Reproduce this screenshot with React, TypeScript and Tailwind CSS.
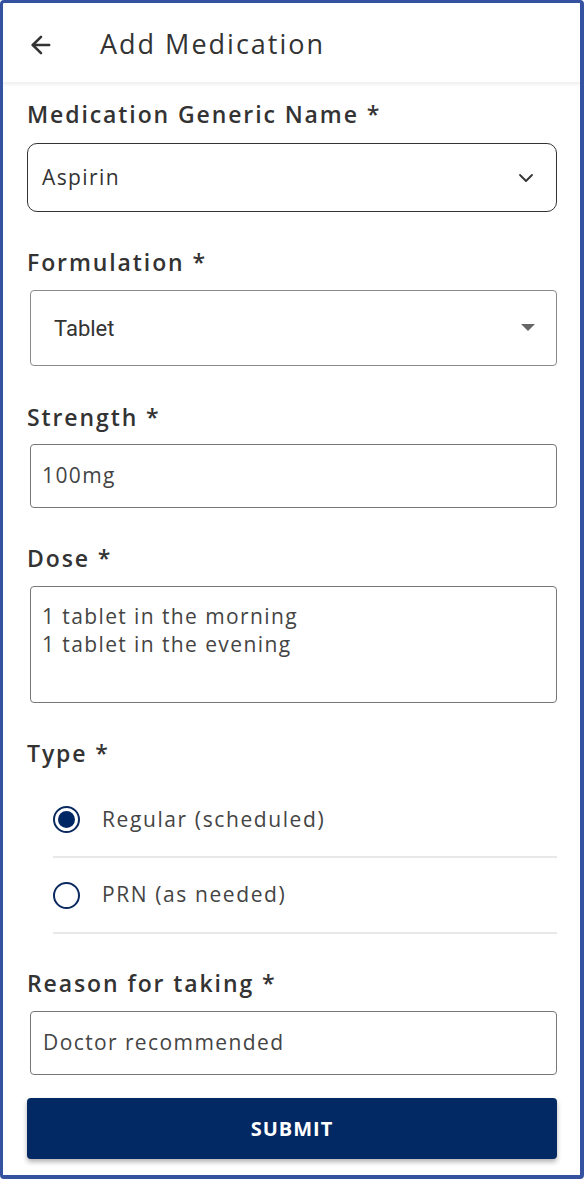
import { ArrowLeft, ChevronDown } from 'lucide-react'

const font = { fontFamily: '"Open Sans", "DejaVu Sans", sans-serif' }

const Label = ({ text, className = '' }: { text: string; className?: string }) => (
  <div className={`h-[28px] leading-[28px] text-[23px] font-semibold text-[#333] tracking-[1.9px] ${className}`}>{text}</div>
)

const Radio = ({ label, checked, h }: { label: string; checked?: boolean; h: string }) => (
  <div className={`flex items-center ${h} ml-[26px] border-b-2 border-[#e8e8e8]`}>
    <div className="w-[27px] h-[27px] rounded-full border-2 border-[#0b2a5f] flex items-center justify-center shrink-0">
      {checked && <div className="w-[17px] h-[17px] rounded-full bg-[#002663]"></div>}
    </div>
    <span className="ml-[22px] text-[21px] text-[#444] tracking-[1.6px]">{label}</span>
  </div>
)

export default function App() {
  return (
    <div style={font} className="w-[584px] h-[1179px] bg-white border-t-[3px] border-l-[3px] border-r-[4px] border-b-[4px] border-[#3452a0] rounded-[4px] flex flex-col overflow-hidden">
      <header className="h-[80px] flex items-center pl-[24px] pt-[4px] shadow-[0_2px_3px_rgba(0,0,0,0.06)] border-b border-[#f0f0f0]">
        <ArrowLeft size={28} strokeWidth={2.2} className="text-[#333]" />
        <h1 className="ml-[45px] text-[27px] font-medium text-[#333] tracking-[2px]">Add Medication</h1>
      </header>

      <div className="flex flex-col pl-[24px] pr-[23px]">
        <Label text="Medication Generic Name *" className="mt-[17px]" />
        <div className="mt-[15px] h-[69px] border-[1.5px] border-[#333] rounded-[10px] flex items-center justify-between pl-[14px] pr-[18px]">
          <span className="text-[21px] text-[#333] tracking-[1.4px]">Aspirin</span>
          <ChevronDown size={24} strokeWidth={1.8} className="text-[#333]" />
        </div>

        <Label text="Formulation *" className="mt-[36px]" />
        <div className="mt-[14px] ml-[3px] h-[76px] border border-[#8a8a8a] rounded-[4px] flex items-center justify-between pl-[23px] pr-[21px]">
          <span className="text-[22px] text-[#333]" style={{ fontFamily: 'Roboto, sans-serif' }}>Tablet</span>
          <svg width="14" height="8" viewBox="0 0 14 8"><path d="M0 0h14L7 7z" fill="#666" /></svg>
        </div>

        <Label text="Strength *" className="mt-[37px]" />
        <div className="mt-[13px] ml-[3px] h-[64px] border-[1.5px] border-[#777] rounded-[4px] flex items-center pl-[11px]">
          <span className="text-[21px] text-[#444] tracking-[1.4px]">100mg</span>
        </div>

        <Label text="Dose *" className="mt-[36px]" />
        <div className="mt-[14px] ml-[3px] h-[117px] border-[1.5px] border-[#777] rounded-[4px] pl-[11px] pt-[15px] text-[21px] leading-[28px] text-[#444] tracking-[1.4px]">
          <div>1 tablet in the morning</div>
          <div>1 tablet in the evening</div>
        </div>

        <Label text="Type *" className="mt-[36px]" />
        <div className="mt-[16px] flex flex-col">
          <Radio label="Regular (scheduled)" checked h="h-[75px]" />
          <Radio label="PRN (as needed)" h="h-[76px]" />
        </div>

        <Label text="Reason for taking *" className="mt-[35px]" />
        <div className="mt-[14px] ml-[3px] h-[64px] border-[1.5px] border-[#777] rounded-[4px] flex items-center pl-[12px]">
          <span className="text-[21px] text-[#444] tracking-[1.4px]">Doctor recommended</span>
        </div>

        <button className="mt-[23px] h-[61px] bg-[#022964] rounded-[4px] shadow-[0_3px_5px_rgba(0,0,0,0.3)] text-white text-[20px] font-bold tracking-[1px]">SUBMIT</button>
      </div>
    </div>
  )
}
